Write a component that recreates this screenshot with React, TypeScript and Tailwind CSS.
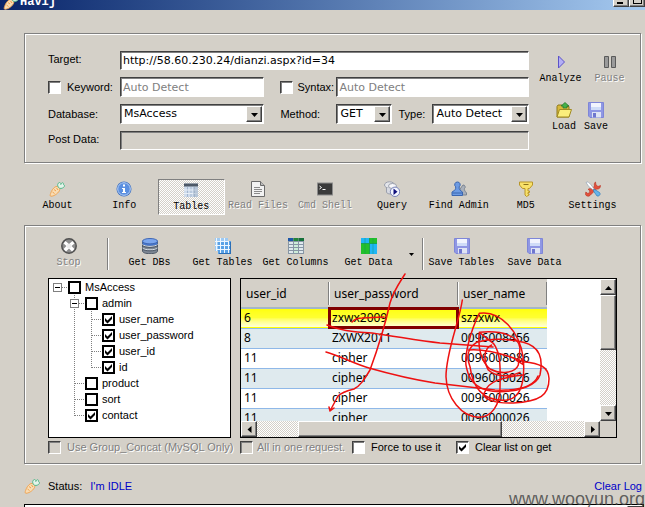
import React from "react";

const SUNKEN =
  "border border-t-[#404040] border-l-[#404040] border-r-white border-b-white shadow-[inset_1px_1px_0_#808080]";
const RAISED =
  "border border-t-white border-l-white border-r-[#404040] border-b-[#404040] bg-[#d4d0c8] shadow-[inset_-1px_-1px_0_#808080]";
const GROUP = "border border-[#808080] shadow-[inset_1px_1px_0_#fff,1px_1px_0_#fff]";
const DITHER = "bg-[repeating-conic-gradient(#fff_0_25%,#d4d0c8_0_50%)] bg-[length:2px_2px]";
const FIELD = "font-['DejaVu_Sans',sans-serif] text-[11px]";
const DISABLED_TEXT = "text-[#808080] [text-shadow:1px_1px_0_#fff]";

function Icon({ children }: { children: React.ReactNode }) {
  return (
    <svg viewBox="0 0 16 16" className="size-4 shrink-0" aria-hidden="true">
      {children}
    </svg>
  );
}

const CarrotIcon = () => (
  <Icon>
    <path d="M7 5.500 C8.500 5 11 7 10.800 8.800 C10 11.500 6 15 2 15.300 C1 15.200 1 14 1.600 12.500 C2.500 9.500 4.500 6.500 7 5.500Z" fill="#f8dcb4" stroke="#f0a04b" strokeWidth=".9" />
    <path d="M5 8.500l2 1.500M3.500 11l2 1.500M7.500 7l1.500 2" stroke="#f0a04b" fill="none" />
    <path d="M9.500 6.500C8 4.500 8.500 2 10.500 1.500c1 0 1.500 1 1.300 2C13 .8 15 1.500 14.500 3.500c1.300.5 1.300 2 0 3C13 7.500 11 8 9.500 6.500Z" fill="#e4f3ea" stroke="#56b98c" />
  </Icon>
);
const InfoIcon = () => (
  <Icon>
    <circle cx="8" cy="8" r="7.500" fill="#3d6fc0" />
    <circle cx="8" cy="8" r="6.300" fill="#5b8fe0" stroke="#b9d2f7" />
    <path d="M7 3.500h2v2H7zM6 7h3v4h1v1H6v-1h1V8H6z" fill="#fff" />
  </Icon>
);
const TablesIcon = () => (
  <Icon>
    <rect x="1" y="1.500" width="14" height="13.500" fill="#cfdcec" />
    <rect x="1" y="1.500" width="14" height="3" fill="#4c5866" />
    <path d="M4.500 5v10M8 5v10M11.500 5v10" stroke="#a3b6cf" />
    <path d="M1 8h14M1 11.500h14" stroke="#e9f0f8" />
    <rect x="10" y="5" width="5" height="10" fill="#9fb0c4" opacity=".5" />
  </Icon>
);
const FileIcon = () => (
  <Icon>
    <path d="M1.500.5h9l4 4v11h-13z" fill="#f2f2f2" stroke="#6b6b6b" />
    <path d="M10.500.5v4h4" fill="#bbb" stroke="#6b6b6b" />
    <path d="M4 6.500h6M4 8.500h8M4 10.500h8M4 12.500h6" stroke="#8a8a8a" />
  </Icon>
);
const ShellIcon = () => (
  <Icon>
    <rect x=".5" y="2" width="15" height="12" fill="#3a3a3a" stroke="#8c8c8c" />
    <path d="M2.500 5l2 1.500-2 1.500M5.500 8.500h3" stroke="#fff" fill="none" />
  </Icon>
);
const QueryIcon = () => (
  <Icon>
    <ellipse cx="5.500" cy="4" rx="5" ry="3.200" fill="#e3e5ea" stroke="#9a9fac" />
    <path d="M2.500 7v4.500c2 2 5 2 7 0V6" fill="#d6d9e2" stroke="#9a9fac" />
    <ellipse cx="8.500" cy="5" rx="4" ry="2.500" fill="#f7f7fa" stroke="#9a9fac" />
    <circle cx="11" cy="10.800" r="4.700" fill="#f4f6ff" stroke="#7782b8" />
    <path d="M9.500 7.500v6.600l4-3.300z" fill="#10107c" />
  </Icon>
);
const AdminIcon = () => (
  <Icon>
    <path d="M12 4a2 2 0 0 1 1.500 3.500c-.5 1 0 2 2 4.500v2H9V8z" fill="#a9b0bb" stroke="#7b8491" />
    <path d="M6.500 1a2.700 2.700 0 0 1 1.700 4.800C7.800 8 9 9.500 11.500 11v3.500H1V11c3-1.500 4-3 3.700-5.200A2.700 2.700 0 0 1 6.500 1Z" fill="#6d9be3" stroke="#3b66b0" />
    <path d="M1.500 12h9.500" stroke="#3b66b0" />
  </Icon>
);
const KeyIcon = () => (
  <Icon>
    <path d="M1.500 1h13v3L11.500 7.500H10V10h1.500v1.500H10V13h1v1l-2.500 1.500L7 14V7.500H4.500L1.500 4z" fill="#f8e16a" stroke="#b8962a" />
    <path d="M5.500 3.500h5" stroke="#8c721a" />
  </Icon>
);
const ToolsIcon = () => (
  <Icon>
    <path d="M10.500 1l.5 3 2 1.500 2.500-1C15.500 7 14 8.500 11.500 8L5 14.500C3.500 16 1 15 .5 13.500l.3-2.500 2 1.500 2-1L4.500 9 3 8.500C4.500 7 6.500 7.500 7 8l2.500-3C9 3 9.500 1.500 10.500 1Z" fill="#e2503c" stroke="#b92d1d" strokeWidth=".6" />
    <path d="M1 1.500L3 .8l3 3 3 4-1 1-4-3z" fill="#fff" stroke="#93a5b8" strokeWidth=".7" />
    <path d="M9 8l5.500 3.500c1.500 1.500 0 4-2.500 3.500L8.500 10z" fill="#65b4ea" stroke="#2d7dbb" strokeWidth=".7" />
  </Icon>
);
const StopIcon = () => (
  <Icon>
    <circle cx="8" cy="8" r="7.200" fill="#8e8e8e" stroke="#505050" strokeWidth="1.500" />
    <path d="M4.500 3L8 6l3.500-3 2 2.500L10.500 8l3 3-2.500 2.500L8 10.500l-3 3L2.500 11l3-3-3-2.500z" fill="#fff" />
    <path d="M6 6h4v4H6z" fill="#eee" />
  </Icon>
);
const DbIcon = () => (
  <Icon>
    <path d="M.5 3v10c0 1.500 3 2.700 7.500 2.700s7.500-1.200 7.500-2.700V3z" fill="#7d8794" stroke="#4e5866" />
    <path d="M.5 6.500c2 2.500 13 2.500 15 0M.5 10c2 2.500 13 2.500 15 0" stroke="#e3e8ee" fill="none" />
    <path d="M.5 7.500c2 2.500 13 2.500 15 0M.5 11c2 2.500 13 2.500 15 0" stroke="#4e5866" fill="none" />
    <path d="M.5 4v2c2 2.300 13 2.300 15 0V4c-2 2-13 2-15 0z" fill="#4778cf" />
    <ellipse cx="8" cy="3.200" rx="7.500" ry="2.700" fill="#7ba6ee" stroke="#3f67b5" />
  </Icon>
);
const GetTablesIcon = () => (
  <Icon>
    <rect x="0" y="0" width="13" height="13" fill="#9cc9f3" />
    <rect x="3" y="3" width="13" height="13" fill="#5aa2e6" />
    <path d="M1.500 0v13M5.500 0v15M9.500 0v15M13.500 3v13M0 3.500h13M0 7.500h15M1 11.500h15" stroke="#eef7ff" />
    <path d="M15.500 4v12M4 15.500h12" stroke="#2b6fb7" />
  </Icon>
);
const ColumnsIcon = () => (
  <Icon>
    <rect x="0" y="0" width="16" height="16" fill="#8796a5" />
    <rect x="0" y="0" width="5" height="3" fill="#1d56a8" />
    <rect x="5.500" y="0" width="5" height="3" fill="#24843a" />
    <rect x="11" y="0" width="5" height="3" fill="#16703a" />
    <path d="M1 4h4v2H1zM1 7h4v2H1zM1 10h4v2H1zM1 13h4v2H1zM11 4h4v2h-4zM11 7h4v2h-4zM11 10h4v2h-4zM11 13h4v2h-4z" fill="#dfe9ee" />
    <path d="M6 4h4v2H6zM6 7h4v2H6zM6 10h4v2H6zM6 13h4v2H6z" fill="#cdeeda" />
  </Icon>
);
const DataIcon = () => (
  <Icon>
    <rect width="16" height="16" fill="#22c02c" />
    <path d="M0 0h8v5H0zM9 6h7v10H9z" fill="#1fb6f6" />
    <path d="M4 0v16M12 0v16" stroke="#128f55" strokeWidth=".4" />
    <path d="M0 5.500h16M8.500 0v16" stroke="#0d8a7a" strokeWidth=".5" />
  </Icon>
);
const DiskIcon = () => (
  <Icon>
    <path d="M.5.5h15v15H2L.5 14z" fill="#8f97e4" stroke="#7e86d8" />
    <rect x="3" y="1" width="10" height="7" fill="#f1f4fe" />
    <path d="M3 5h10v3H3z" fill="#cfdcf8" />
    <rect x="4" y="10" width="9" height="5.500" fill="#dfe4f4" />
    <rect x="5" y="11" width="3" height="4.500" fill="#6f77cf" />
  </Icon>
);
const FolderIcon = () => (
  <Icon>
    <path d="M1 4.500l1-1.500h4l1 1.500h6V15H1z" fill="#d8b83c" stroke="#8f7a1b" />
    <path d="M3.500 7.500h12L13 15H1z" fill="#fbee7c" stroke="#a08a22" />
    <path d="M9 .5L13 4h-2v2H7V4H5z" fill="#44b04a" stroke="#24762b" strokeWidth=".7" />
  </Icon>
);
const PlayIcon = () => (
  <Icon>
    <path d="M5.500 2v12l6-6z" fill="#b4aff5" stroke="#5b52c9" />
  </Icon>
);
const PauseIcon = () => (
  <Icon>
    <path d="M2.500 2.500h4v11h-4zM9.500 2.500h4v11h-4z" fill="#9a9a9a" stroke="#5a5a5a" />
  </Icon>
);

function ToolButton({
  icon,
  label,
  disabled,
  className = "",
}: {
  icon: React.ReactNode;
  label: string;
  disabled?: boolean;
  className?: string;
}) {
  return (
    <button
      type="button"
      disabled={disabled}
      className={`flex flex-col items-center gap-0.5 whitespace-nowrap font-['Liberation_Mono',monospace] text-[10px] leading-[14px] ${disabled ? DISABLED_TEXT : ""} ${className}`}
    >
      {icon}
      <span>{label}</span>
    </button>
  );
}

function CheckMark() {
  return (
    <svg viewBox="0 0 13 13" className="pointer-events-none absolute inset-0 size-full" aria-hidden="true">
      <path d="M3 5v3l2.500 2.500L10 6V3L5.500 7.500z" fill="#000" />
    </svg>
  );
}

function CheckBox({
  label,
  checked,
  disabled,
  thick,
  gap = "gap-1.5",
}: {
  label: string;
  checked?: boolean;
  disabled?: boolean;
  thick?: boolean;
  gap?: string;
}) {
  const look = thick ? "border-2 border-black bg-white" : `${SUNKEN} ${disabled ? "bg-[#d4d0c8]" : "bg-white"}`;
  return (
    <label className={`flex items-center whitespace-nowrap ${gap} ${disabled ? DISABLED_TEXT : ""}`}>
      <span className="relative size-[13px] shrink-0">
        <input type="checkbox" defaultChecked={checked} disabled={disabled} className={`block size-[13px] appearance-none ${look}`} />
        {checked && <CheckMark />}
      </span>
      {label}
    </label>
  );
}

function Combo({ id, value }: { id: string; value: string }) {
  return (
    <div className={`relative h-5 min-w-0 bg-white ${SUNKEN}`}>
      <select id={id} defaultValue={value} className={`block h-full w-full appearance-none pl-[3px] pr-5 ${FIELD}`}>
        <option>{value}</option>
      </select>
      <span className={`pointer-events-none absolute inset-y-px right-px flex w-4 items-center justify-center ${RAISED}`}>
        <Arrow dir="down" />
      </span>
    </div>
  );
}

function Arrow({ dir }: { dir: "up" | "down" | "left" | "right" }) {
  const d = {
    up: "M0 6h7L3.500 2z",
    down: "M0 2h7L3.500 6z",
    left: "M5.500 0v7L1.500 3.500z",
    right: "M2 0v7l4-3.500z",
  }[dir];
  return (
    <svg viewBox="0 0 7 7" className="size-[7px]" aria-hidden="true">
      <path d={d} fill="#000" />
    </svg>
  );
}

function ScrollButton({ dir }: { dir: "up" | "down" | "left" | "right" }) {
  return (
    <button type="button" aria-label={`Scroll ${dir}`} className={`flex size-4 shrink-0 items-center justify-center ${RAISED}`}>
      <Arrow dir={dir} />
    </button>
  );
}

type Part = "branch" | "last" | "line" | "none" | "open-root" | "open";

function Connector({ part, end }: { part: Part; end?: boolean }) {
  const expander = part === "open-root" || part === "open";
  return (
    <svg viewBox={end ? "0 0 15 16" : "0 0 17 16"} className={end ? "h-4 w-[15px] shrink-0" : "h-4 w-[17px] shrink-0"} aria-hidden="true">
      <g stroke="#808080" strokeDasharray="1 1" fill="none">
        {(part === "branch" || part === "line" || part === "open") && <path d="M4.500 0v16" />}
        {part === "last" && <path d="M4.500 0v9" />}
        {part !== "line" && part !== "none" && <path d="M5 8.500h10" />}
      </g>
      {expander && (
        <g>
          <rect x=".5" y="4.500" width="8" height="8" fill="#fff" stroke="#808080" />
          <path d="M2 8.500h5" stroke="#000" />
        </g>
      )}
    </svg>
  );
}

const TREE: { label: string; parts: Part[]; checked?: boolean }[] = [
  { label: "MsAccess", parts: ["open-root"] },
  { label: "admin", parts: ["none", "open"] },
  { label: "user_name", parts: ["none", "line", "branch"], checked: true },
  { label: "user_password", parts: ["none", "line", "branch"], checked: true },
  { label: "user_id", parts: ["none", "line", "branch"], checked: true },
  { label: "id", parts: ["none", "line", "last"], checked: true },
  { label: "product", parts: ["none", "branch"] },
  { label: "sort", parts: ["none", "branch"] },
  { label: "contact", parts: ["none", "last"], checked: true },
];

const ROWS = [
  ["6", "zxwx2009", "szzxwx"],
  ["8", "ZXWX2011", "0096008456"],
  ["11", "cipher", "0096008086"],
  ["11", "cipher", "0096000026"],
  ["11", "cipher", "0096000026"],
  ["11", "cipher", "0096000026"],
];

function DataGrid() {
  return (
    <div className="flex h-40 min-w-0 flex-1 flex-col border border-black bg-white">
      <div className="flex min-h-0 flex-1">
        <div className="min-w-0 flex-1 overflow-hidden">
          <table className="w-[306px] table-fixed border-collapse font-['Noto_Sans',sans-serif] text-xs leading-4">
            <colgroup>
              <col className="w-[88px]" />
              <col className="w-[129px]" />
              <col className="w-[89px]" />
            </colgroup>
            <thead>
              <tr className="h-[29px] border-b-2 border-[#a3b6c8] bg-[#d4d0c8]">
                {["user_id", "user_password", "user_name"].map((h) => (
                  <th key={h} className="p-0 py-0.5 font-normal">
                    <div className="flex h-[23px] items-center border-r border-[#808080] pl-[5px] pt-0.5 shadow-[1px_0_0_#fff]">{h}</div>
                  </th>
                ))}
              </tr>
            </thead>
            <tbody>
              {ROWS.map((row, i) => (
                <tr
                  key={i}
                  className={`h-5 border-b border-[#8fb8e8] ${
                    i === 0 ? "bg-linear-to-b from-[#ffff00] via-[#ffff30] to-[#ffffd8]" : i % 2 ? "bg-[#dfeaee]" : "bg-white"
                  }`}
                >
                  {row.map((cell, j) => (
                    <td key={j} className={`p-0 pl-[3px] ${i === 0 && j === 1 ? "outline-3 -outline-offset-2 outline-[#800000]" : ""}`}>
                      {cell}
                    </td>
                  ))}
                </tr>
              ))}
            </tbody>
          </table>
        </div>
        <div className={`flex w-4 flex-col ${DITHER}`}>
          <ScrollButton dir="up" />
          <div className={`h-[55px] ${RAISED}`} />
          <div className="flex-1" />
          <ScrollButton dir="down" />
        </div>
      </div>
      <div className="flex h-4 bg-[#d4d0c8]">
        <div className={`flex min-w-0 flex-1 ${DITHER}`}>
          <ScrollButton dir="left" />
          <div className="w-[41px]" />
          <div className={`w-[204px] ${RAISED}`} />
          <div className="flex-1" />
          <ScrollButton dir="right" />
        </div>
        <div className="w-4" />
      </div>
    </div>
  );
}

function Scribble() {
  return (
    <svg viewBox="0 0 645 507" className="pointer-events-none absolute left-0 top-0 h-[507px] w-[645px]" aria-hidden="true">
      <g fill="none" stroke="#ee1111" strokeWidth="1.500" strokeLinecap="round" strokeLinejoin="round">
        <path d="M405 274C398 285 393 292 390 303C384 330 378 348 370 370C364 380 360 386 354 389C346 391 341 393 338 396L330 411M329 407l1 4l4-3" />
        <path d="M352 322C355 319 358 318 362 318L384 317" />
        <path d="M327 325C340 330 350 332 372 333C400 337 420 341 440 343L493 347" />
        <path d="M326 352C340 356 355 364 369 368C390 374 410 379 435 383L495 390C520 391 534 386 538 376" />
      </g>
      <g transform="translate(440 295) scale(.3333)" fill="none" stroke="#ee1111" strokeWidth="4.500" strokeLinecap="round" strokeLinejoin="round">
        <path d="M67 15C58 80 18 170 18 245C20 310 65 366 118 367C155 365 180 330 180 280C181 230 184 175 160 145L118 112C112 160 125 200 150 222C180 238 225 236 235 210L240 160C238 125 190 105 118 112" />
        <path d="M118 55C90 110 70 190 80 220C90 270 130 290 180 290C240 290 290 270 300 240C310 190 300 155 250 142C200 130 150 130 110 142C80 160 80 190 90 215C100 290 140 320 200 315C240 310 256 270 250 190C240 110 180 45 118 55Z" />
        <path d="M155 150C130 160 130 200 145 225C170 248 210 246 240 232M85 165C140 160 200 180 250 200C300 205 325 215 327 250C328 300 300 320 220 324C160 326 120 310 135 290C145 260 180 248 250 240M228 195l22 14-4-18" />
      </g>
    </svg>
  );
}

export default function App() {
  return (
    <div className="relative flex h-screen flex-col overflow-hidden bg-[#d4d0c8] font-['Liberation_Sans',sans-serif] text-[11px] leading-4 text-black">
      <header className="flex h-2.5 shrink-0 items-end overflow-hidden bg-linear-to-r from-[#0a246a] to-[#a6caf0] pl-[3px]">
        <CarrotIcon />
        <h1 className="flex-1 pl-px font-['Liberation_Mono',monospace] text-xs font-bold leading-4 text-white">Havij</h1>
        <button type="button" aria-label="Minimize" className={`mb-[3px] flex h-3.5 w-4 items-end pb-0.5 pl-[3px] ${RAISED}`}>
          <span className="h-0.5 w-1.5 bg-black" />
        </button>
        <button type="button" aria-label="Maximize" className={`mb-[3px] flex h-3.5 w-4 items-end justify-center pb-0.5 ${RAISED}`}>
          <span className="h-2 w-[9px] border border-t-2 border-black" />
        </button>
      </header>

      <section className={`ml-6 mr-1 mt-[23px] flex shrink-0 pb-3 pl-[23px] pt-[17px] ${GROUP}`}>
        <form className="flex min-w-0 flex-1 flex-col gap-[7px]">
          <div className="flex h-[19px]">
            <label htmlFor="target" className="w-[72px]">Target:</label>
            <input id="target" defaultValue="http://58.60.230.24/dianzi.aspx?id=34" className={`min-w-0 flex-1 bg-white pl-0.5 ${FIELD} ${SUNKEN}`} />
          </div>
          <div className="grid grid-cols-[72px_3fr_72px_4fr] items-center">
            <CheckBox label="Keyword:" />
            <input aria-label="Keyword" placeholder="Auto Detect" className={`h-5 min-w-0 bg-white pl-0.5 placeholder:text-[#808080] ${FIELD} ${SUNKEN}`} />
            <div className="pl-4">
              <CheckBox label="Syntax:" gap="gap-1" />
            </div>
            <input aria-label="Syntax" placeholder="Auto Detect" className={`h-5 min-w-0 bg-white pl-0.5 placeholder:text-[#808080] ${FIELD} ${SUNKEN}`} />
          </div>
          <div className="grid grid-cols-[72px_3fr_72px_4fr] items-center">
            <label htmlFor="database">Database:</label>
            <Combo id="database" value="MsAccess" />
            <label htmlFor="method" className="pl-4">Method:</label>
            <div className="grid grid-cols-[56px_40px_1fr] items-center">
              <Combo id="method" value="GET" />
              <label htmlFor="type" className="pl-1.5">Type:</label>
              <Combo id="type" value="Auto Detect" />
            </div>
          </div>
          <div className="flex h-[19px]">
            <label htmlFor="post" className="w-[72px]">Post Data:</label>
            <input id="post" disabled className={`min-w-0 flex-1 bg-[#d4d0c8] ${FIELD} ${SUNKEN}`} />
          </div>
        </form>
        <div className="flex w-[111px] flex-col gap-4 pl-[7px] pt-[3px]">
          <div className="flex">
            <ToolButton icon={<PlayIcon />} label="Analyze" className="w-[49px]" />
            <ToolButton icon={<PauseIcon />} label="Pause" disabled className="w-[49px]" />
          </div>
          <div className="flex pl-3">
            <ToolButton icon={<FolderIcon />} label="Load" className="w-8" />
            <ToolButton icon={<DiskIcon />} label="Save" className="w-8" />
          </div>
        </div>
      </section>

      <nav className="ml-6 mr-[19px] mt-4 grid h-[35px] shrink-0 grid-cols-9">
        <ToolButton icon={<CarrotIcon />} label="About" className="pt-0.5" />
        <ToolButton icon={<InfoIcon />} label="Info" className="pt-0.5" />
        <ToolButton
          icon={<TablesIcon />}
          label="Tables"
          className={`border border-b-white border-l-[#808080] border-r-white border-t-[#808080] pt-0.5 ${DITHER}`}
        />
        <ToolButton icon={<FileIcon />} label="Read Files" disabled className="pt-0.5" />
        <ToolButton icon={<ShellIcon />} label="Cmd Shell" disabled className="pt-0.5" />
        <ToolButton icon={<QueryIcon />} label="Query" className="pt-0.5" />
        <ToolButton icon={<AdminIcon />} label="Find Admin" className="pt-0.5" />
        <ToolButton icon={<KeyIcon />} label="MD5" className="pt-0.5" />
        <ToolButton icon={<ToolsIcon />} label="Settings" className="pt-0.5" />
      </nav>

      <section className={`ml-6 mr-1 mt-[11px] shrink-0 pb-2 pl-[23px] pr-[23px] pt-3 ${GROUP}`}>
        <div className="-ml-4 flex h-10">
          <ToolButton icon={<StopIcon />} label="Stop" disabled className="w-[73px]" />
          <div className="mr-1 h-8 w-1 border-r border-white pl-0.5">
            <div className="h-full border-r border-[#808080]" />
          </div>
          <ToolButton icon={<DbIcon />} label="Get DBs" className="w-[73px]" />
          <ToolButton icon={<GetTablesIcon />} label="Get Tables" className="w-[73px]" />
          <ToolButton icon={<ColumnsIcon />} label="Get Columns" className="w-[73px]" />
          <ToolButton icon={<DataIcon />} label="Get Data" className="w-[73px]" />
          <button type="button" aria-label="Get Data options" className="flex h-8 w-3 items-center justify-center">
            <svg viewBox="0 0 5 3" className="h-[3px] w-[5px]" aria-hidden="true">
              <path d="M0 0h5L2.500 3z" />
            </svg>
          </button>
          <div className="mr-px h-8 w-[7px] border-r border-white pl-0.5">
            <div className="h-full border-r border-[#808080]" />
          </div>
          <ToolButton icon={<DiskIcon />} label="Save Tables" className="w-[73px]" />
          <ToolButton icon={<DiskIcon />} label="Save Data" className="w-[73px]" />
        </div>
        <div className="flex gap-[9px]">
          <div className="h-40 w-[183px] shrink-0 overflow-hidden border border-black bg-white pl-1">
            <ul>
              {TREE.map((node) => (
                <li key={node.label} className="flex h-4 items-center">
                  {node.parts.map((p, i) => (
                    <Connector key={i} part={p} end={i === node.parts.length - 1} />
                  ))}
                  <CheckBox label={node.label} checked={node.checked} thick gap="gap-1" />
                </li>
              ))}
            </ul>
          </div>
          <DataGrid />
        </div>
        <div className="flex pt-px">
          <div className="w-48">
            <CheckBox label="Use Group_Concat (MySQL Only)" disabled />
          </div>
          <div className="w-28">
            <CheckBox label="All in one request." disabled gap="gap-1" />
          </div>
          <div className="w-[104px]">
            <CheckBox label="Force to use it" />
          </div>
          <CheckBox label="Clear list on get" checked />
        </div>
      </section>

      <div className="ml-6 mr-[3px] mt-3.5 flex shrink-0 items-center">
        <CarrotIcon />
        <span className="pl-2">Status:</span>
        <output className="flex-1 pl-2 text-[#0000c8]">I'm IDLE</output>
        <a href="#log" className="text-[#0000c8]">Clear Log</a>
      </div>
      <div id="log" className="ml-6 mr-px mt-2.5 flex min-h-0 flex-1 justify-end border border-b-0 border-black bg-white">
        <div className={`w-4 ${RAISED}`} />
      </div>

      <Scribble />
      <p className="absolute -bottom-1 right-0 font-['Liberation_Sans',sans-serif] text-lg leading-6 text-[#404040]/80">www.wooyun.org</p>
    </div>
  );
}
